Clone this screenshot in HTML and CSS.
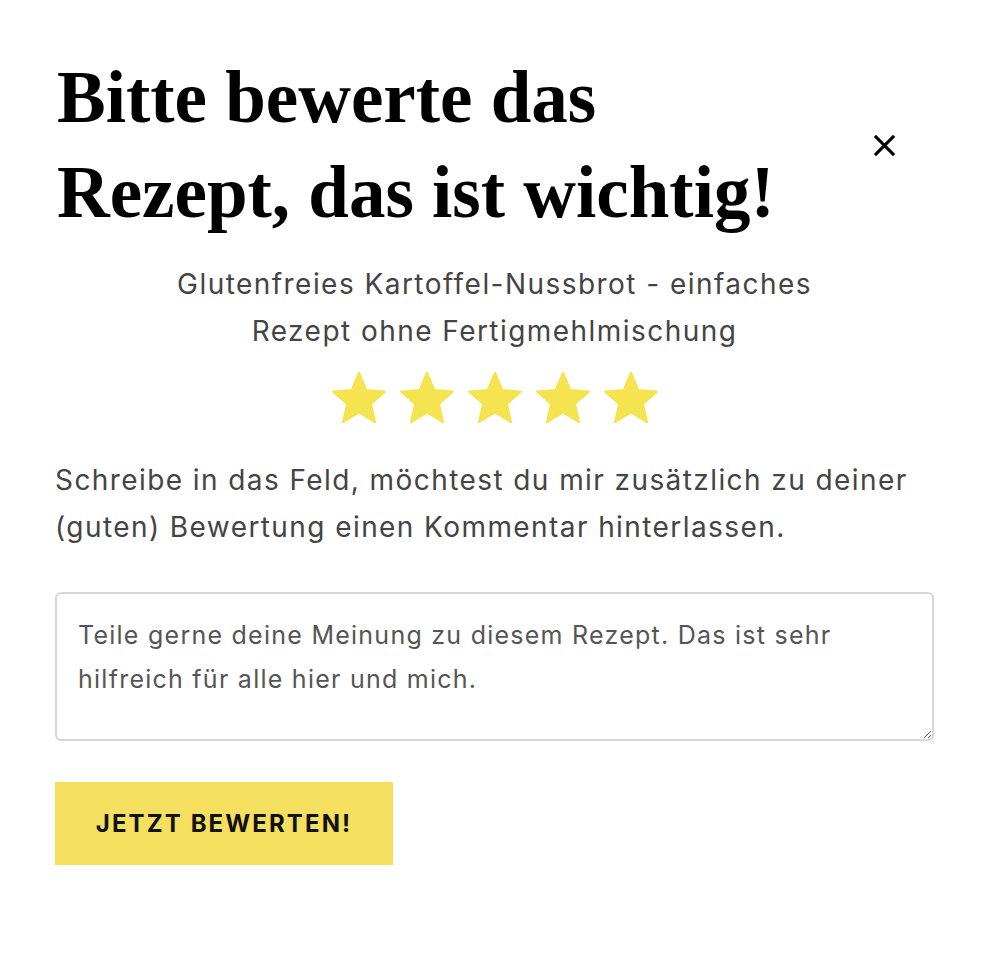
FILE: index.html
```html
<!DOCTYPE html>
<html lang="de">
<head>
<meta charset="utf-8">
<title>Bewertung</title>
<link rel="stylesheet" href="styles.css">
</head>
<body>
<div class="modal">
  <div class="header">
    <h1 class="title">Bitte bewerte das Rezept, das ist wichtig!</h1>
    <button class="close" aria-label="Schließen">
      <svg width="24" height="24" viewBox="0 0 24 24"><path d="M2 2L22 22M22 2L2 22" stroke="#000" stroke-width="3.2" fill="none"/></svg>
    </button>
  </div>
  <p class="recipe">Glutenfreies Kartoffel-Nussbrot - einfaches Rezept ohne Fertigmehlmischung</p>
  <div class="stars">
    <svg class="star" viewBox="2 2 20 19" overflow="visible"><path d="M12 17.27L18.18 21l-1.64-7.03L22 9.24l-7.19-.61L12 2 9.19 8.63 2 9.24l5.46 4.73L5.82 21z"/></svg>
    <svg class="star" viewBox="2 2 20 19" overflow="visible"><path d="M12 17.27L18.18 21l-1.64-7.03L22 9.24l-7.19-.61L12 2 9.19 8.63 2 9.24l5.46 4.73L5.82 21z"/></svg>
    <svg class="star" viewBox="2 2 20 19" overflow="visible"><path d="M12 17.27L18.18 21l-1.64-7.03L22 9.24l-7.19-.61L12 2 9.19 8.63 2 9.24l5.46 4.73L5.82 21z"/></svg>
    <svg class="star" viewBox="2 2 20 19" overflow="visible"><path d="M12 17.27L18.18 21l-1.64-7.03L22 9.24l-7.19-.61L12 2 9.19 8.63 2 9.24l5.46 4.73L5.82 21z"/></svg>
    <svg class="star" viewBox="2 2 20 19" overflow="visible"><path d="M12 17.27L18.18 21l-1.64-7.03L22 9.24l-7.19-.61L12 2 9.19 8.63 2 9.24l5.46 4.73L5.82 21z"/></svg>
  </div>
  <p class="intro">Schreibe in das Feld, möchtest du mir zusätzlich zu deiner (guten) Bewertung einen Kommentar hinterlassen.</p>
  <textarea class="comment" placeholder="Teile gerne deine Meinung zu diesem Rezept. Das ist sehr hilfreich für alle hier und mich."></textarea>
  <button class="submit">JETZT BEWERTEN!</button>
</div>
</body>
</html>
```

FILE: styles.css
```css
html, body {
  margin: 0;
  padding: 0;
  background: #fff;
}

.modal {
  width: 879px;
  margin-left: 55px;
  padding-top: 50px;
  font-family: Inter, "Liberation Sans", sans-serif;
  color: #444;
}

.header {
  display: flex;
  align-items: center;
  justify-content: space-between;
}

.title {
  margin: 0;
  width: 760px;
  font-family: "Liberation Serif", serif;
  font-weight: bold;
  font-size: 73px;
  line-height: 95px;
  color: #000;
  padding-left: 2px;
}

.close {
  width: 48px;
  height: 48px;
  margin-right: 26px;
  padding: 0;
  border: 0;
  background: transparent;
  display: flex;
  align-items: center;
  justify-content: center;
}

.close svg {
  width: 23px;
  height: 23px;
}

.recipe {
  max-width: 700px;
  margin: 21px auto 0;
  text-align: center;
  font-size: 28px;
  line-height: 47px;
  letter-spacing: 1.45px;
}

.stars {
  display: flex;
  justify-content: center;
  gap: 16px;
  margin-top: 18px;
}

.star {
  width: 52px;
  height: 49px;
  fill: #f5e34f;
  stroke: #f5e34f;
  stroke-width: 0.9;
  stroke-linejoin: round;
}

.intro {
  margin: 35px 0 0;
  font-size: 28px;
  line-height: 47px;
  letter-spacing: 1.42px;
}

.comment {
  display: block;
  box-sizing: border-box;
  width: 879px;
  height: 149px;
  margin-top: 41px;
  padding: 19px 21px;
  border: 2px solid #d6d6d6;
  border-radius: 6px;
  font-family: Inter, "Liberation Sans", sans-serif;
  font-size: 25px;
  line-height: 44px;
  letter-spacing: 1.25px;
  color: #444;
  resize: vertical;
}

.comment::placeholder {
  color: #555;
  opacity: 1;
}

.submit {
  display: block;
  width: 338px;
  height: 83px;
  margin-top: 41px;
  border: 0;
  background: #f4df5e;
  font-family: Inter, "Liberation Sans", sans-serif;
  font-weight: 700;
  font-size: 24px;
  letter-spacing: 2.1px;
  color: #111;
}
```
